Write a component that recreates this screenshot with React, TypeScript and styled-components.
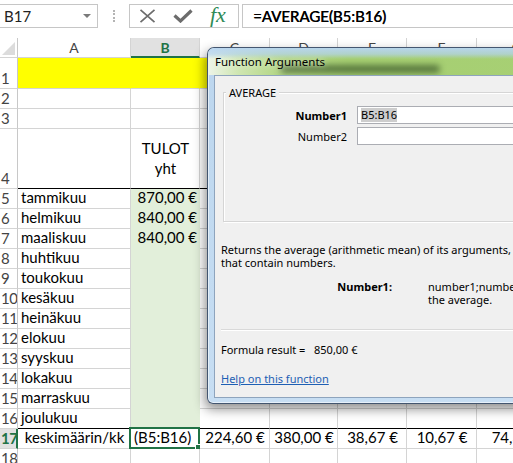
import React from 'react'
import styled, { createGlobalStyle } from 'styled-components'

const XL_FONT = `'Lato', 'Open Sans', sans-serif`
const UI_FONT = `'Noto Sans', 'Open Sans', sans-serif`
const GREEN = '#217346'
const GRID = '#d4d4d4'
const YELLOW = '#ffff00'
const MINT = '#e2efda'

const GlobalStyle = createGlobalStyle`
	html, body {
		margin: 0;
		padding: 0;
		background: #fff;
	}
	body {
		overflow: hidden;
	}
`

const Screen = styled.div`
	position: relative;
	width: 513px;
	height: 463px;
	overflow: hidden;
	background: #fff;
	font-family: ${XL_FONT};
`

/* ---------- formula bar ---------- */

const FormulaBar = styled.div`
	display: flex;
	align-items: flex-start;
	height: 38px;
	padding-top: 4px;
	box-sizing: border-box;
`

const NameBox = styled.div`
	box-sizing: border-box;
	width: 98px;
	height: 24px;
	border: 1px solid #c6c6c6;
	border-left: none;
	display: flex;
	align-items: center;
	justify-content: space-between;
	padding: 0 6px 0 4px;
	font-size: 15px;
	color: #222;
`

const DropArrow = styled.span`
	width: 0;
	height: 0;
	border-left: 4px solid transparent;
	border-right: 4px solid transparent;
	border-top: 4px solid #7a7a7a;
`

const Grip = styled.div`
	width: 31px;
	height: 24px;
	display: flex;
	align-items: center;
	justify-content: center;
	&::before {
		content: '';
		height: 12px;
		border-left: 2px dotted #b4b4b4;
	}
`

const FxBox = styled.div`
	box-sizing: border-box;
	width: 110px;
	height: 24px;
	border: 1px solid #c6c6c6;
	display: flex;
	align-items: center;
	padding-left: 9px;
	gap: 17px;
`

const FxGlyph = styled.span`
	font-family: 'Liberation Serif', 'DejaVu Serif', serif;
	font-style: italic;
	font-size: 22px;
	line-height: 20px;
	color: #2e8b57;
	margin-top: -2px;
`

const FormulaInput = styled.div`
	box-sizing: border-box;
	flex: 1;
	height: 24px;
	margin-left: 3px;
	border: 1px solid #c6c6c6;
	border-right: none;
	display: flex;
	align-items: center;
	padding-left: 10px;
	font-size: 15px;
	color: #000;
	text-shadow: 0.4px 0 0 #000;
`

/* ---------- sheet grid ---------- */

const COL_WIDTHS = [113, 69, 70, 68, 69, 70, 80]
const COLS = ['A', 'B', 'C', 'D', 'E', 'F', 'G']

const Sheet = styled.div`
	display: grid;
	grid-template-columns: 18px ${COL_WIDTHS.map(w => `${w}px`).join(' ')};
	grid-template-rows: 20px 31px 20px 20px 60px;
	grid-auto-rows: 20px;
`

const Corner = styled.div`
	box-sizing: border-box;
	border-right: 1px solid #c8c8c8;
	border-bottom: 1px solid ${GRID};
	display: flex;
	align-items: flex-end;
	justify-content: flex-end;
	padding: 0 2px 2px 0;
	&::after {
		content: '';
		width: 13px;
		height: 13px;
		background: #dcdcdc;
		clip-path: polygon(100% 0, 100% 100%, 0 100%);
	}
`

const ColHead = styled.div<{ $active?: boolean }>`
	box-sizing: border-box;
	display: flex;
	align-items: center;
	justify-content: center;
	font-size: 14px;
	color: ${p => (p.$active ? GREEN : '#444')};
	font-weight: ${p => (p.$active ? 700 : 400)};
	background: ${p => (p.$active ? '#e1e1e1' : '#fff')};
	border-right: 1px solid ${GRID};
	border-bottom: ${p => (p.$active ? `2px solid ${GREEN}` : `1px solid ${GRID}`)};
`

const RowHead = styled.div<{ $active?: boolean }>`
	box-sizing: border-box;
	display: flex;
	align-items: flex-end;
	padding: 0 0 1px 1px;
	font-size: 15px;
	line-height: 18px;
	color: ${p => (p.$active ? GREEN : '#444')};
	font-weight: ${p => (p.$active ? 700 : 400)};
	background: ${p => (p.$active ? '#e1e1e1' : '#fff')};
	border-right: ${p => (p.$active ? `2px solid ${GREEN}` : '1px solid #c8c8c8')};
	border-bottom: 1px solid ${GRID};
	overflow: hidden;
	letter-spacing: -0.5px;
`

type Align = 'left' | 'center' | 'right'

const Cell = styled.div<{ $bg?: string; $align?: Align; $middle?: boolean; $bottom?: string; $right?: string }>`
	position: relative;
	box-sizing: border-box;
	display: flex;
	flex-direction: column;
	justify-content: ${p => (p.$middle ? 'center' : 'flex-end')};
	align-items: ${p => (p.$align === 'right' ? 'flex-end' : p.$align === 'center' ? 'center' : 'flex-start')};
	text-align: ${p => p.$align ?? 'left'};
	padding: 0 2px 1px 3px;
	background: ${p => p.$bg ?? '#fff'};
	border-right: 1px solid ${p => p.$right ?? GRID};
	border-bottom: 1px solid ${p => p.$bottom ?? GRID};
	font-size: 15px;
	line-height: ${p => (p.$middle ? '20px' : '19px')};
	color: #000;
	white-space: nowrap;
`

const Selection = styled.div`
	position: absolute;
	top: -2px;
	left: -2px;
	right: -1px;
	bottom: -1px;
	border: 2px solid ${GREEN};
	pointer-events: none;
	&::after {
		content: '';
		position: absolute;
		right: -4px;
		bottom: -4px;
		width: 5px;
		height: 5px;
		background: ${GREEN};
		border: 1px solid #fff;
	}
`

/* ---------- dialog ---------- */

const Dialog = styled.div`
	position: absolute;
	left: 207px;
	top: 47px;
	width: 560px;
	height: 357px;
	box-sizing: border-box;
	display: flex;
	flex-direction: column;
	padding: 0 6px 5px 6px;
	border: 1px solid rgba(45, 62, 88, 0.85);
	border-radius: 7px 7px 6px 6px;
	background: linear-gradient(180deg, #bcd6ee 0%, #c7def3 100%);
	box-shadow: -2px 5px 12px rgba(0, 0, 0, 0.45), inset 0 0 0 1px rgba(255, 255, 255, 0.55);
	font-family: ${UI_FONT};
	font-size: 11px;
	color: #000;
`

const TitleBar = styled.div`
	position: relative;
	height: 27px;
	margin: 0 -6px;
	padding-left: 7px;
	display: flex;
	align-items: center;
	border-radius: 6px 6px 0 0;
	overflow: hidden;
	background:
		linear-gradient(180deg, rgba(184, 213, 242, 0.95) 0px, rgba(180, 211, 240, 0.7) 6px, rgba(180, 211, 240, 0) 11px),
		linear-gradient(90deg, #eef5e8 0px, #cfe6b2 30px, #b4d787 70px, #a6cf72 140px, #a8d076 100%);
`

const TitleText = styled.span`
	position: relative;
	z-index: 1;
	font-size: 11.5px;
	color: #000;
	text-shadow: 0 0 6px rgba(255, 255, 255, 0.9);
`

const GlassSmear = styled.div`
	position: absolute;
	left: 72px;
	top: 17px;
	width: 160px;
	height: 8px;
	border-radius: 4px;
	background: rgba(35, 60, 25, 0.6);
	filter: blur(3px);
`

const Client = styled.div`
	flex: 1;
	border: 1px solid #8ea4bd;
	background: #f0f0f0;
	padding: 0 6px;
	display: flex;
	flex-direction: column;
`

const GroupBox = styled.div`
	position: relative;
	box-sizing: border-box;
	height: 130px;
	margin: 16px 2px 0 2px;
	padding-top: 13px;
	border: 1px solid #d5d5d5;
	box-shadow: inset 1px 1px 0 #fff, 1px 1px 0 #fff;
	display: flex;
	flex-direction: column;
	gap: 3px;
`

const Legend = styled.span`
	position: absolute;
	top: -8px;
	left: 2px;
	padding: 0 3px;
	line-height: 15px;
	background: #f0f0f0;
`

const ArgRow = styled.div`
	display: flex;
	align-items: center;
	height: 18px;
`

const ArgLabel = styled.span<{ $bold?: boolean }>`
	flex-shrink: 0;
	width: 123px;
	margin-right: 10px;
	text-align: right;
	font-weight: ${p => (p.$bold ? 700 : 400)};
`

const ArgInput = styled.div`
	box-sizing: border-box;
	flex-shrink: 0;
	width: 260px;
	height: 18px;
	border: 1px solid #abadb3;
	background: #fff;
	padding-left: 3px;
	display: flex;
	align-items: center;
`

const Highlight = styled.span`
	background: #cdcdcd;
	line-height: 14px;
`

const Description = styled.div`
	margin-top: 21px;
	line-height: 13px;
	white-space: nowrap;
`

const ArgHelp = styled.div`
	display: flex;
	margin-top: 11px;
	line-height: 13px;
	white-space: nowrap;
`

const ArgHelpName = styled.span`
	flex-shrink: 0;
	width: 171px;
	text-align: right;
	font-weight: 700;
`

const ArgHelpText = styled.span`
	flex-shrink: 0;
	margin-left: 36px;
`

const Separator = styled.div`
	margin-top: 23px;
	height: 1px;
	background: #d9d9d9;
	box-shadow: 0 1px 0 #fff;
`

const Result = styled.div`
	display: flex;
	margin-top: 13px;
	line-height: 13px;
`

const ResultLabel = styled.span`
	flex-shrink: 0;
	width: 93px;
`

const HelpLink = styled.a`
	margin-top: 16px;
	line-height: 13px;
	color: #1e5fb4;
	text-decoration: underline;
	align-self: flex-start;
	cursor: pointer;
`

/* ---------- data ---------- */

const MONTHS = ['tammikuu', 'helmikuu', 'maaliskuu', 'huhtikuu', 'toukokuu', 'kesäkuu', 'heinäkuu', 'elokuu', 'syyskuu', 'lokakuu', 'marraskuu', 'joulukuu']
const INCOME: Record<number, string> = { 5: '870,00 €', 6: '840,00 €', 7: '840,00 €' }
const AVERAGES = ['224,60 €', '380,00 €', '38,67 €', '10,67 €', '74,33 €']

type CellDef = { text?: React.ReactNode; align?: Align; middle?: boolean; bg?: string; bottom?: string; right?: string; selected?: boolean }

function cellAt(row: number, col: number): CellDef {
	const def: CellDef = {}
	if (row === 1) {
		def.bg = YELLOW
		def.right = YELLOW
	}
	if (row === 4 || row === 16) def.bottom = '#000'
	if (row === 4 && col === 1) {
		def.text = <>TULOT<br />yht</>
		def.align = 'center'
		def.middle = true
	}
	if (row >= 5 && row <= 16) {
		if (col === 0) def.text = MONTHS[row - 5]
		if (col === 1) {
			def.bg = MINT
			def.right = MINT
			if (row < 16) def.bottom = MINT
			def.text = INCOME[row]
			def.align = 'right'
		}
	}
	if (row === 17) {
		if (col === 0) {
			def.text = 'keskimäärin/kk'
			def.align = 'center'
		} else if (col === 1) {
			def.text = '(B5:B16)'
			def.selected = true
		} else {
			def.text = AVERAGES[col - 2]
			def.align = 'center'
		}
	}
	return def
}

const XIcon = () => (
	<svg width="17" height="14" viewBox="0 0 17 14">
		<path d="M1.5 0.8 L15.5 13.2 M15.5 0.8 L1.5 13.2" stroke="#6c6c6c" strokeWidth="1.7" fill="none" />
	</svg>
)

const CheckIcon = () => (
	<svg width="20" height="14" viewBox="0 0 20 14">
		<path d="M1.5 6.5 L7.5 12 L18.5 1.5" stroke="#6c6c6c" strokeWidth="3.2" fill="none" strokeLinejoin="miter" />
	</svg>
)

const App: React.FC = () => {
	const rows = Array.from({ length: 18 }, (_, i) => i + 1)
	return (
		<Screen>
			<GlobalStyle />
			<FormulaBar>
				<NameBox>
					B17
					<DropArrow />
				</NameBox>
				<Grip />
				<FxBox>
					<XIcon />
					<CheckIcon />
					<FxGlyph>fx</FxGlyph>
				</FxBox>
				<FormulaInput>=AVERAGE(B5:B16)</FormulaInput>
			</FormulaBar>

			<Sheet>
				<Corner />
				{COLS.map(c => (
					<ColHead key={c} $active={c === 'B'}>{c}</ColHead>
				))}
				{rows.map(r => (
					<React.Fragment key={r}>
						<RowHead $active={r === 17}>{r}</RowHead>
						{COLS.map((c, ci) => {
							const d = cellAt(r, ci)
							return (
								<Cell key={c} $bg={d.bg} $align={d.align} $middle={d.middle} $bottom={d.bottom} $right={d.right}>
									{d.text && <span>{d.text}</span>}
									{d.selected && <Selection />}
								</Cell>
							)
						})}
					</React.Fragment>
				))}
			</Sheet>

			<Dialog>
				<TitleBar>
					<GlassSmear />
					<TitleText>Function Arguments</TitleText>
				</TitleBar>
				<Client>
					<GroupBox>
						<Legend>AVERAGE</Legend>
						<ArgRow>
							<ArgLabel $bold>Number1</ArgLabel>
							<ArgInput><Highlight>B5:B16</Highlight></ArgInput>
						</ArgRow>
						<ArgRow>
							<ArgLabel>Number2</ArgLabel>
							<ArgInput />
						</ArgRow>
					</GroupBox>
					<Description>
						Returns the average (arithmetic mean) of its arguments, which can be numbers or names, arrays, or references
						<br />
						that contain numbers.
					</Description>
					<ArgHelp>
						<ArgHelpName>Number1:</ArgHelpName>
						<ArgHelpText>
							number1;number2;... are 1 to 255 numeric arguments for which you want
							<br />
							the average.
						</ArgHelpText>
					</ArgHelp>
					<Separator />
					<Result>
						<ResultLabel>Formula result =</ResultLabel>
						<span>850,00 €</span>
					</Result>
					<HelpLink>Help on this function</HelpLink>
				</Client>
			</Dialog>
		</Screen>
	)
}

export default App
